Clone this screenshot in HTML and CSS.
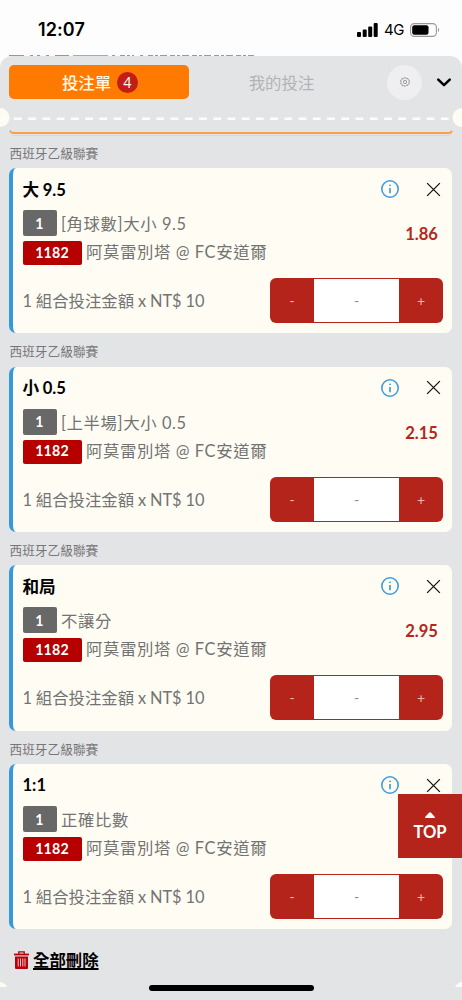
FILE: index.html
```html
<!DOCTYPE html>
<html lang="zh-Hant">
<head>
<meta charset="utf-8">
<meta name="viewport" content="width=device-width, initial-scale=1">
<title>投注單</title>
<link rel="stylesheet" href="styles.css">
</head>
<body>
<svg class="symbols" aria-hidden="true">
  <symbol id="info" viewBox="0 0 18 18"><circle cx="9" cy="9" r="8.2" fill="none" stroke="#3f9ddd" stroke-width="1.6"/><circle cx="9" cy="5.3" r=".9" fill="#3498db"/><path d="M9 8v5.2" stroke="#3498db" stroke-width="1.6"/></symbol>
  <symbol id="close" viewBox="0 0 16 16"><path d="M1.2 1.2l13.6 13.6M14.8 1.2L1.2 14.8" stroke="#111" stroke-width="1.35"/></symbol>
</svg>
<div class="screen">
  <header class="status">
    <span class="time">12:07</span>
    <div class="signals">
      <svg width="21" height="14" viewBox="0 0 21 14"><rect x="0" y="9" width="4" height="5" rx="1"/><rect x="5.7" y="6.5" width="4" height="7.5" rx="1"/><rect x="11.2" y="3.5" width="4" height="10.5" rx="1"/><rect x="16.7" y="0" width="4" height="14" rx="1"/></svg>
      <span class="network">4G</span>
      <svg width="30" height="14" viewBox="0 0 30 14"><rect x=".6" y=".6" width="25.8" height="12.8" rx="3.6" fill="none" stroke="#999" stroke-width="1.1"/><rect x="2.2" y="2.2" width="16.3" height="9.6" rx="2"/><path d="M28 4.8q2.4 2.2 0 4.4z" fill="#999"/></svg>
    </div>
  </header>
  <svg class="behind" width="462" height="2" viewBox="0 0 462 2"><g stroke-width="1"><path d="M9 1.500H24M30 1.500h3M37 1.500h3M46 1.500h3M55 1.500H69" stroke="#c58287"/><path d="M73 1.500H108" stroke="#aaa"/><path d="M112 1.500h3M120 1.500h14M140 1.500h3M148 1.500H254" stroke="#999" stroke-dasharray="5 2 3 2 7 3"/></g></svg>
  <main class="sheet">
    <nav class="tabs">
      <div class="tab active">投注單<span class="count">4</span></div>
      <div class="tab">我的投注</div>
      <div class="gear"><svg width="10" height="10" viewBox="0 0 20 20" fill="none" stroke="#888" stroke-width="1.6"><path d="M10 1l2.3 2 3-.5.9 2.9 2.7 1.4-1.1 2.9 1.1 2.9-2.7 1.4-.9 2.9-3-.5L10 19l-2.300-2-3 .5-.9-2.900-2.700-1.400 1.100-2.900L1.100 6.800l2.700-1.400.9-2.900 3 .5z"/><circle cx="10" cy="10" r="3.3"/></svg></div>
      <svg class="chevron" width="14" height="9" viewBox="0 0 14 9"><path d="M1.300 1.700L7 7.200l5.700-5.500" fill="none" stroke="#000" stroke-width="2.500" stroke-linecap="round" stroke-linejoin="round"/></svg>
    </nav>
    <svg class="tear" width="462" height="20" viewBox="0 0 462 20"><g fill="#fffdf3"><circle cx="0" cy="9.600" r="9.500"/><circle cx="462" cy="9.600" r="9.500"/></g><path d="M14 10.700H449" stroke="#fffdf3" stroke-width="2.400" stroke-dasharray="7.800 6.430"/></svg>
    <svg class="previous" width="444" height="6" viewBox="0 0 444 6" fill="none"><path d="M1 2.500Q2 5.500 6 5.500H438Q441 5.500 443 3" stroke="#d5d7da"/><path d="M.8.600Q2 3 5 3H439Q442 3 443 .800" stroke="#f6a04b" stroke-width="1.900"/></svg>

    <h2 class="league first">西班牙乙級聯賽</h2>
    <section class="bet">
      <div class="head"><b>大 9.5</b><svg class="info"><use href="#info"/></svg><svg class="close"><use href="#close"/></svg></div>
      <div class="detail"><div class="lines"><p><span class="tag">1</span>[角球數]大小 9.5</p><p class="match"><span class="tag code">1182</span>阿莫雷別塔 @ FC安道爾</p></div><strong class="odds">1.86</strong></div>
      <div class="stake"><span class="amount">1 組合投注金額 x NT$ 10</span><div class="stepper"><span>-</span><span class="value">-</span><span>+</span></div></div>
    </section>

    <h2 class="league">西班牙乙級聯賽</h2>
    <section class="bet">
      <div class="head"><b>小 0.5</b><svg class="info"><use href="#info"/></svg><svg class="close"><use href="#close"/></svg></div>
      <div class="detail"><div class="lines"><p><span class="tag">1</span>[上半場]大小 0.5</p><p class="match"><span class="tag code">1182</span>阿莫雷別塔 @ FC安道爾</p></div><strong class="odds">2.15</strong></div>
      <div class="stake"><span class="amount">1 組合投注金額 x NT$ 10</span><div class="stepper"><span>-</span><span class="value">-</span><span>+</span></div></div>
    </section>

    <h2 class="league">西班牙乙級聯賽</h2>
    <section class="bet">
      <div class="head"><b>和局</b><svg class="info"><use href="#info"/></svg><svg class="close"><use href="#close"/></svg></div>
      <div class="detail"><div class="lines"><p><span class="tag">1</span>不讓分</p><p class="match"><span class="tag code">1182</span>阿莫雷別塔 @ FC安道爾</p></div><strong class="odds">2.95</strong></div>
      <div class="stake"><span class="amount">1 組合投注金額 x NT$ 10</span><div class="stepper"><span>-</span><span class="value">-</span><span>+</span></div></div>
    </section>

    <h2 class="league">西班牙乙級聯賽</h2>
    <section class="bet">
      <div class="head"><b>1:1</b><svg class="info"><use href="#info"/></svg><svg class="close"><use href="#close"/></svg></div>
      <div class="detail"><div class="lines"><p><span class="tag">1</span>正確比數</p><p class="match"><span class="tag code">1182</span>阿莫雷別塔 @ FC安道爾</p></div></div>
      <div class="stake"><span class="amount">1 組合投注金額 x NT$ 10</span><div class="stepper"><span>-</span><span class="value">-</span><span>+</span></div></div>
    </section>

    <div class="clear">
      <svg width="15" height="18" viewBox="0 0 15 18" fill="none" stroke="#b80008"><path d="M0 3.500H15" stroke-width="1.800"/><path d="M4.800 3V.900h5.400v2.100" stroke-width="1.300"/><path d="M1 5.500h13V17q0 1-1 1H2q-1 0-1-1z" fill="#b80008" stroke="none"/><path d="M4.200 7.500v8M6.500 7.500v8M8.800 7.500v8M11 7.500v8" stroke="#f1d9da" stroke-width=".9"/></svg>
      <a>全部刪除</a>
    </div>
  </main>
  <svg class="notches" width="462" height="5" viewBox="0 0 462 5"><g fill="#fffdf3"><circle cx="-1" cy="9" r="9"/><circle cx="463" cy="9" r="9"/></g></svg>
  <div class="top-link"><svg width="10" height="6" viewBox="0 0 10 6"><path d="M0 6q0-1 1-2L4 .8q1-1 2 0L9 4q1 1 1 2z" fill="#fff"/></svg><span>TOP</span></div>
  <div class="home-bar"></div>
</div>
</body>
</html>
```
FILE: styles.css
```css
* { box-sizing: border-box; }
body { margin: 0; background: #fdfdfd; font-family: Lato, "Noto Sans CJK TC", sans-serif; color: #737373; }
svg { display: block; flex: none; }
p, h2 { margin: 0; font-weight: 400; }
.symbols { position: absolute; width: 0; height: 0; }
.screen { position: relative; width: 462px; height: 1000px; overflow: hidden; display: flex; flex-direction: column; }

.status { height: 54px; flex: none; display: flex; justify-content: space-between; align-items: center; padding: 5px 22px 0 38px; color: #000; font-family: Inter, sans-serif; }
.time { font-size: 18px; font-weight: 600; letter-spacing: .1px; }
.signals { display: flex; align-items: center; gap: 6px; }
.network { font-size: 15px; font-weight: 400; letter-spacing: -.4px; line-height: 16px; }
.behind { height: 2px; }

.sheet { flex: 1; background: #e3e4e6; border-radius: 12px 12px 0 0; }
.tabs { display: flex; align-items: center; height: 52px; padding: 0 11px 0 9px; }
.tab { width: 180px; height: 34px; display: flex; align-items: center; justify-content: center; font-size: 16.4px; color: #b2b3b5; padding-bottom: 1px; }
.tab + .tab { width: 186px; padding-right: 1px; }
.tab.active { background: #ff7a00; border-radius: 5px; color: #fff8ea; font-weight: 500; padding: 0 0 1px 2px; }
.count { width: 21px; height: 21px; margin: 1px 0 0 6px; border-radius: 50%; background: #c21d17; display: flex; align-items: center; justify-content: center; font-size: 14.500px; font-weight: 400; }
.gear { width: 35px; height: 35px; margin-left: 12px; border-radius: 50%; background: #efeff1; display: flex; align-items: center; justify-content: center; }
.chevron { margin: 1px 0 0 15px; }
.tear { height: 20px; }
.previous { height: 6px; margin: 2px 9px 0; }

.league { height: 33.500px; padding: 9px 0 0 9.500px; font-size: 12.700px; line-height: 18px; color: #77777a; }
.league.first { height: 32px; padding-top: 8px; }
.bet { margin: 0 10px 0 9px; height: 165.200px; background: #fffdf3; border-left: 4px solid #3498db; border-radius: 7px; padding: 0 9px 0 9.500px; font-size: 16.400px; }
.head { height: 42px; display: flex; align-items: center; color: #000; }
.head b { flex: 1; font-size: 16.600px; word-spacing: -.500px; padding-bottom: 1px; }
.info { width: 18px; height: 18px; }
.close { width: 15px; height: 15px; margin: 0 2px 0 27px; }
.detail { height: 68px; display: flex; justify-content: space-between; }
.lines { display: flex; flex-direction: column; gap: 5px; }
.lines p { display: flex; align-items: center; height: 26px; gap: 4.500px; letter-spacing: .600px; white-space: nowrap; }
.lines .match { height: 24px; line-height: 22px; padding-bottom: 2px; }
.tag { width: 34px; height: 26px; border-radius: 2px; background: #686868; color: #fff; font-size: 14.200px; font-weight: 700; letter-spacing: .200px; display: flex; align-items: center; justify-content: center; }
.tag.code { width: 59px; height: 24px; background: #b60000; margin-top: 2px; padding-bottom: 1px; }
.odds { height: 49px; line-height: 49px; padding-right: 5px; font-size: 16.600px; color: #b7251b; }
.stake { height: 45px; display: flex; align-items: center; justify-content: space-between; white-space: nowrap; }
.amount { word-spacing: -.400px; padding-bottom: 1px; }
.stepper { width: 173px; height: 45px; display: flex; align-items: center; background: #b5241a; border-radius: 6px; color: #e8b5ad; font-size: 14px; text-align: center; }
.stepper span { flex: 1; }
.stepper .value { flex: none; width: 85px; height: 43px; line-height: 43px; background: #fff; color: #888; }

.clear { display: flex; align-items: center; gap: 4px; height: 26px; margin: 18px 0 0 14px; color: #000; font-size: 16.400px; font-weight: 700; }
.clear a { text-decoration: underline; text-decoration-thickness: 1.500px; text-underline-offset: 2px; padding-bottom: 2px; }
.top-link { position: absolute; right: 0; top: 794px; width: 64px; height: 64px; background: #b5241a; color: #fff; display: flex; flex-direction: column; align-items: center; padding-top: 18px; font-size: 16.600px; font-weight: 700; line-height: 28px; }
.home-bar { position: absolute; left: 149px; bottom: 9px; width: 165px; height: 6px; border-radius: 3px; background: #000; }
.notches { position: absolute; left: 0; bottom: 13px; }
```
